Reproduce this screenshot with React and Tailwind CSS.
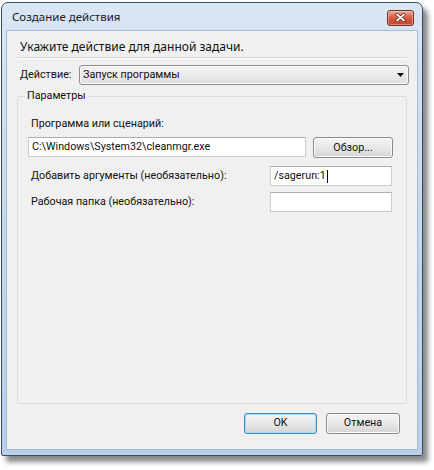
import React from 'react';

const font = { fontFamily: 'Roboto, "Noto Sans", sans-serif' };
const headFont = { fontFamily: '"Noto Sans", "Open Sans", sans-serif' };

const TextBox = ({ value, caret, className }) => (
  <div
    className={`h-[20px] bg-white border border-[#c7cdd6] border-t-[#abadb3] flex items-center pl-[3px] text-[10.75px] text-[#111] ${className}`}
  >
    <span>{value}</span>
    {caret && <span className="w-px h-[13px] bg-black ml-px" />}
  </div>
);

const Win7Button = ({ children, primary, className }) => (
  <button
    className={`h-[21px] rounded-[3px] border text-[10.75px] text-[#111] bg-gradient-to-b from-[#f4f4f4] via-[#e8e8e8] to-[#d4d4d4] ${
      primary ? 'border-[#3c89c4] shadow-[inset_0_0_0_1px_#a9dcf6]' : 'border-[#8b8b8b] shadow-[inset_0_0_0_1px_#fbfbfb]'
    } ${className}`}
  >
    {children}
  </button>
);

const App = () => {
  return (
    <div className="w-[434px] h-[470px] bg-white pt-[2px] pl-[1px]" style={font}>
      {/* Window */}
      <div className="w-[422px] h-[454px] rounded-t-[7px] rounded-b-[2px] border border-[#384a60] bg-gradient-to-b from-[#d9e6f4] via-[#c6d8ed] to-[#b9cfe8] shadow-[5px_6px_5px_rgba(40,40,40,0.55)] flex flex-col">
        {/* Title bar */}
        <div className="h-[27px] flex items-center justify-between pl-[10px] pr-[8px] shrink-0">
          <span className="text-[11.5px] text-[#1b1b1b] mt-[1px]" style={headFont}>Создание действия</span>
          <button className="w-[27px] h-[16px] mt-[2px] rounded-[3px] border border-[#7a2d1e] bg-gradient-to-b from-[#e9a99a] via-[#d3583c] to-[#c0472c] flex items-center justify-center shadow-[inset_0_0_0_1px_rgba(255,255,255,0.35)]">
            <svg width="11" height="9" viewBox="0 0 11 9">
              <path d="M2 1.5 L9 7.5 M9 1.5 L2 7.5" stroke="#5a2318" strokeWidth="3.2" strokeLinecap="round" />
              <path d="M2 1.5 L9 7.5 M9 1.5 L2 7.5" stroke="#ffffff" strokeWidth="1.8" strokeLinecap="round" />
            </svg>
          </button>
        </div>

        {/* Client area */}
        <div className="flex-1 mx-[4px] mb-[5px] bg-[#f0f0f0] border border-[#a5bcd8] flex flex-col text-[10.75px] text-[#111]">
          <div className="pl-[13px] pt-[7px] h-[24px] text-[12px]" style={headFont}>
            Укажите действие для данной задачи.
          </div>
          <div className="mx-[10px] mt-[2px] border-t border-[#d5d5d5] border-b border-b-white" />

          {/* Action row */}
          <div className="flex items-center mt-[6px] pl-[13px] pr-[8px]">
            <span className="w-[59px]">Действие:</span>
            <div className="flex-1 h-[20px] rounded-[3px] border border-[#8e8f8f] bg-gradient-to-b from-[#f2f2f2] via-[#ebebeb] to-[#dcdcdc] flex items-center justify-between pl-[3px] pr-[4px] shadow-[inset_0_0_0_1px_#fcfcfc]">
              <span>Запуск программы</span>
              <svg width="7" height="4" viewBox="0 0 7 4">
                <path d="M0 0 H7 L3.5 4 Z" fill="#111" />
              </svg>
            </div>
          </div>

          {/* Parameters group */}
          <div className="relative mx-[10px] mt-[11px] h-[308px] border border-[#d5dfe5] rounded-[2px] px-[10px] pt-[19px]">
            <span className="absolute -top-[9px] left-[7px] px-[2px] bg-[#f0f0f0]">Параметры</span>
            <div className="pl-[3px]">Программа или сценарий:</div>
            <div className="flex items-center gap-[7px] mt-[4px]">
              <TextBox value="C:\Windows\System32\cleanmgr.exe" className="w-[278px]" />
              <Win7Button className="w-[80px] mt-px">Обзор...</Win7Button>
            </div>
            <div className="flex items-center justify-between mt-[8px] pr-[4px]">
              <span className="pl-[3px]">Добавить аргументы (необязательно):</span>
              <TextBox value="/sagerun:1" caret className="w-[122px]" />
            </div>
            <div className="flex items-center justify-between mt-[6px] pr-[4px]">
              <span className="pl-[3px]">Рабочая папка (необязательно):</span>
              <TextBox value="" className="w-[122px]" />
            </div>
          </div>

          {/* Buttons */}
          <div className="flex justify-end gap-[9px] mt-[9px] pr-[17px]">
            <Win7Button primary className="w-[73px]">OK</Win7Button>
            <Win7Button className="w-[74px]">Отмена</Win7Button>
          </div>
        </div>
      </div>
    </div>
  );
};

export default App;
